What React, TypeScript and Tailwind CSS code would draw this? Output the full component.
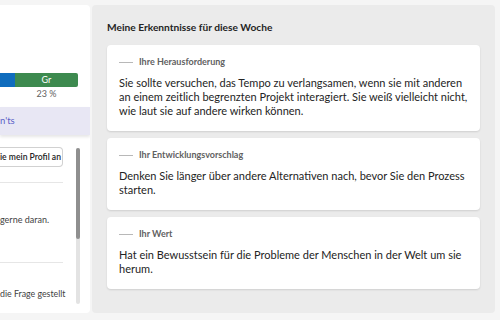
import React from "react";

const font = "font-['Lato',sans-serif]";

const Card = ({ label, text }: { label: string; text: string }) => (
  <div className="bg-white rounded-[4px] shadow-[0_1px_2px_rgba(0,0,0,0.12)] pl-[12px] pr-[6px] pt-[11px] pb-[13px]">
    <div className="flex items-center gap-[6px] h-[12px]">
      <div className="w-[14px] h-px bg-[#b8b8b8]" />
      <div className="text-[9px] leading-[12px] font-bold text-[#616161]">{label}</div>
    </div>
    <p className="mt-[8px] text-[11px] leading-[14px] text-[#242424]">{text}</p>
  </div>
);

export default function App() {
  return (
    <div className={`w-[500px] h-[320px] bg-[#f5f5f5] flex gap-[2px] pt-[5px] pb-[7px] pr-[5px] ${font}`}>
      {/* left: profile panel, scrolled partly out of view */}
      <div className="w-[90px] bg-white rounded-r-[4px] flex flex-col overflow-hidden">
        <div className="h-[68px]" />
        <div className="flex h-[14px] pr-[12px]">
          <div className="w-[15px] bg-[#0f6cbd]" />
          <div className="flex-1 bg-[#3d8a4f] rounded-r-[2px] flex items-center justify-center text-white text-[9px] leading-[12px]">
            Gr
          </div>
        </div>
        <div className="flex pr-[12px] mt-px">
          <div className="w-[15px]" />
          <div className="flex-1 text-center text-[9px] leading-[12px] text-[#616161]">23 %</div>
        </div>
        <div className="mt-[7px] h-[28px] bg-[#e8e7f4] shadow-[0_2px_3px_rgba(0,0,0,0.1)] flex items-center">
          <span className="text-[9.5px] text-[#5b5fc7]">n'ts</span>
        </div>
        <div className="flex-1 flex pt-[12px] pb-[9px]">
          <div className="w-[63px] flex flex-col items-end">
            <div className="h-[20px] w-full border border-l-0 border-[#d1d1d1] rounded-r-[4px] pr-px flex items-center justify-end whitespace-nowrap text-[8.6px] font-semibold text-[#242424]">
              ie mein Profil an
            </div>
            <div className="mt-[15px] w-full h-px bg-[#e6e6e6]" />
            <span className="mt-[31px] mr-[10px] self-start whitespace-nowrap text-[9px] leading-[12px] text-[#424242]">gerne daran.</span>
            <div className="mt-[36px] w-full h-px bg-[#e6e6e6]" />
            <span className="mt-[25px] self-start whitespace-nowrap text-[8.8px] leading-[12px] text-[#424242]">die Frage gestellt</span>
          </div>
          <div className="ml-[13px] mt-px w-[4px] rounded-full bg-[#e3e3e3] flex flex-col">
            <div className="h-[91px] rounded-full bg-[#8f8f8f]" />
          </div>
        </div>
      </div>

      {/* right: insights */}
      <div className="flex-1 bg-[#ebebeb] rounded-[4px] px-[15px] pt-[15px]">
        <h2 className="text-[10.2px] leading-[14px] font-bold text-[#242424]">
          Meine Erkenntnisse für diese Woche
        </h2>
        <div className="mt-[11px] flex flex-col gap-[7px]">
          <Card
            label="Ihre Herausforderung"
            text="Sie sollte versuchen, das Tempo zu verlangsamen, wenn sie mit anderen an einem zeitlich begrenzten Projekt interagiert. Sie weiß vielleicht nicht, wie laut sie auf andere wirken können."
          />
          <Card
            label="Ihr Entwicklungsvorschlag"
            text="Denken Sie länger über andere Alternativen nach, bevor Sie den Prozess starten."
          />
          <Card
            label="Ihr Wert"
            text="Hat ein Bewusstsein für die Probleme der Menschen in der Welt um sie herum."
          />
        </div>
      </div>
    </div>
  );
}
